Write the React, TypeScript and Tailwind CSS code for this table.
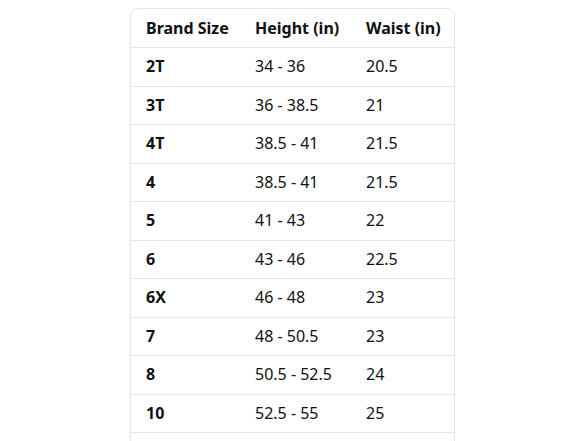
const rows = [
  ['2T', '34 - 36', '20.5'],
  ['3T', '36 - 38.5', '21'],
  ['4T', '38.5 - 41', '21.5'],
  ['4', '38.5 - 41', '21.5'],
  ['5', '41 - 43', '22'],
  ['6', '43 - 46', '22.5'],
  ['6X', '46 - 48', '23'],
  ['7', '48 - 50.5', '23'],
  ['8', '50.5 - 52.5', '24'],
  ['10', '52.5 - 55', '25'],
];

export default function App() {
  return (
    <div className="h-[441px] w-[588px] overflow-hidden bg-white pt-2 pl-[130px] font-['Noto_Sans',sans-serif] text-[16px] leading-6 text-[#0f1111]">
      <div className="w-[325px] rounded-t-lg border border-[#e3e6e6]">
        <div className="grid h-[38px] grid-cols-[110px_111px_1fr] items-center pb-px font-bold">
          <span className="pl-[15px]">Brand Size</span>
          <span className="pl-[14px]">Height (in)</span>
          <span className="pl-[14px]">Waist (in)</span>
        </div>
        {rows.map((r) => (
          <div
            key={r[0]}
            className="grid h-[38.5px] grid-cols-[110px_111px_1fr] items-center border-t border-[#e3e6e6] pb-px"
          >
            <span className="pl-[15px] font-bold">{r[0]}</span>
            <span className="pl-[14px]">{r[1]}</span>
            <span className="pl-[14px]">{r[2]}</span>
          </div>
        ))}
        {/* next row starts just below the fold */}
        <div className="h-[38.5px] border-t border-[#e3e6e6]" />
      </div>
    </div>
  );
}
